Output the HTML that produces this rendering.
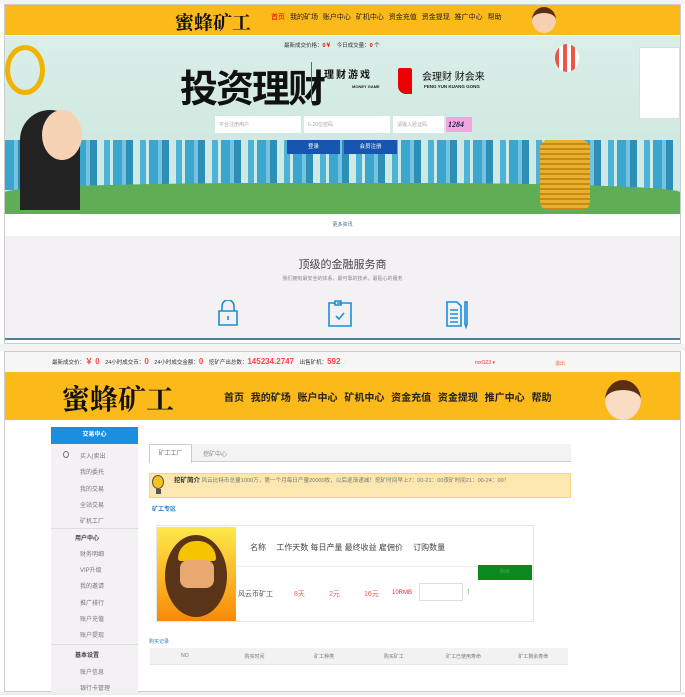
<!DOCTYPE html><html><head><meta charset="utf-8"><style>
*{margin:0;padding:0;box-sizing:border-box}
body{width:685px;height:695px;background:#fff;font-family:"Liberation Sans","Noto Sans CJK SC",sans-serif;position:relative;overflow:hidden;font-size:7px;color:#555}
.a{position:absolute}
.y{background:#fbb91a}
</style></head><body>
<div class="a" style="left:0;top:0;width:685px;height:4px;background:#f3f3f3"></div>
<div class="a" style="left:4px;top:4px;width:677px;height:340px;border:1px solid #ccc"></div>
<div class="a y" style="left:5px;top:5px;width:675px;height:30px"></div>
<div class="a" style="left:175px;top:8px;font:bold 19px 'Liberation Serif','Noto Serif CJK SC',serif;color:#111">蜜蜂矿工</div>
<div class="a" style="left:271px;top:12px;font-size:7px;color:#222;word-spacing:3px"><span style="color:#e00">首页</span> 我的矿场 账户中心 矿机中心 资金充值 资金提现 推广中心 帮助</div>
<div class="a" style="left:532px;top:7px;width:24px;height:26px;border-radius:50%;background:#f6d0b0;border-top:6px solid #5a2e12"></div>
<div class="a" style="left:5px;top:36px;width:675px;height:178px;background:linear-gradient(#dbeee9,#c8e6dc)"></div>
<div class="a" style="left:5px;top:140px;width:675px;height:50px;background:repeating-linear-gradient(90deg,#3aa6d0 0 9px,#74c4e0 9px 13px,#2d8fb8 13px 20px,#cfe9e5 20px 27px,#4db2d8 27px 33px,#cfe9e5 33px 36px)"></div>
<div class="a" style="left:5px;top:183px;width:675px;height:31px;background:#5fae55;border-radius:40% 40% 0 0/30% 30% 0 0"></div>
<div class="a" style="left:20px;top:110px;width:60px;height:100px;background:#222;border-radius:30px 30px 0 0"></div>
<div class="a" style="left:42px;top:110px;width:40px;height:50px;background:#f7d3b5;border-radius:50%"></div>
<div class="a" style="left:5px;top:45px;width:40px;height:50px;border:5px solid #f0b400;border-radius:50%"></div>
<div class="a" style="left:540px;top:140px;width:50px;height:70px;background:repeating-linear-gradient(#e6b030 0 3px,#c88a10 3px 5px);border-radius:8px"></div>
<div class="a" style="left:555px;top:44px;width:24px;height:28px;border-radius:50%;background:repeating-linear-gradient(90deg,#e8574a 0 4px,#fff 4px 8px)"></div>
<div class="a" style="left:284px;top:41px;font-size:5.5px;color:#333">最新成交价格：<b style="color:#e00">0￥</b>　今日成交量：<b style="color:#e00">0</b> 个</div>
<div class="a" style="left:180px;top:58px;font:bold 38px 'Noto Sans CJK SC',sans-serif;color:#111;letter-spacing:-2px">投资理财</div>
<div class="a" style="left:311px;top:62px;width:1px;height:40px;background:#666"></div>
<div class="a" style="left:324px;top:66px;font:bold 10px 'Noto Sans CJK SC',sans-serif;color:#111;letter-spacing:2px">理财游戏</div>
<div class="a" style="left:352px;top:84px;font-size:4px;color:#222;font-weight:bold">MONEY GAME</div>
<div class="a" style="left:398px;top:68px;width:14px;height:26px;background:#e00;border-radius:2px 2px 0 8px"></div>
<div class="a" style="left:422px;top:68px;font-size:10px;color:#111">会理财 财会来</div>
<div class="a" style="left:424px;top:84px;font-size:4.5px;color:#222;font-weight:bold">FENG YUN KUANG GONG</div>
<div class="a" style="left:215px;top:116px;width:86px;height:17px;background:#fff;font-size:5px;color:#aaa;padding:5px 4px">平台注册用户</div>
<div class="a" style="left:304px;top:116px;width:86px;height:17px;background:#fff;font-size:5px;color:#aaa;padding:5px 4px">6-20位密码</div>
<div class="a" style="left:393px;top:116px;width:51px;height:17px;background:#fff;font-size:5px;color:#aaa;padding:5px 4px">请输入验证码</div>
<div class="a" style="left:446px;top:117px;width:26px;height:15px;background:#f5a5e0;font:italic bold 8px serif;color:#224;padding:3px 2px">1284</div>
<div class="a" style="left:287px;top:140px;width:53px;height:14px;background:#1656b0;color:#fff;font-size:5.5px;text-align:center;line-height:14px">登录</div>
<div class="a" style="left:344px;top:140px;width:53px;height:14px;background:#1656b0;color:#fff;font-size:5.5px;text-align:center;line-height:14px">会员注册</div>
<div class="a" style="left:639px;top:47px;width:41px;height:72px;background:#fff;border:1px solid #ddd"></div>
<div class="a" style="left:5px;top:214px;width:675px;height:22px;background:#fff;text-align:center;font-size:5px;color:#468;line-height:22px">更多资讯</div>
<div class="a" style="left:5px;top:236px;width:675px;height:104px;background:#f4f1f4"></div>
<div class="a" style="left:5px;top:256px;width:675px;text-align:center;font-size:11px;color:#444">顶级的金融服务商</div>
<div class="a" style="left:5px;top:275px;width:675px;text-align:center;font-size:5px;color:#888">我们拥有最安全的体系，最可靠的技术，最贴心的服务</div>
<svg class="a" style="left:215px;top:300px" width="260" height="30" fill="none" stroke="#1a8fd8" stroke-width="1.6">
<path d="M7 11V6a6 6 0 0 1 12 0v5M4 11h18v14H4z M13 16v4"/>
<path d="M122 3h14v23h-22V3h6M120 1h6v4h-6zM121 16l3 3 5-6"/>
<path d="M232 2h10l4 4v20h-14zM235 10h8M235 14h8M235 18h8M235 22h8M250 2v22l1 3 1-3V2z"/>
</svg>
<div class="a" style="left:5px;top:338px;width:675px;height:2px;background:#4a7fa8"></div>
<div class="a" style="left:0;top:344px;width:685px;height:7px;background:#f3f3f3"></div>
<div class="a" style="left:4px;top:351px;width:677px;height:341px;border:1px solid #ccc"></div>
<div class="a" style="left:5px;top:352px;width:675px;height:20px;background:#f6f6f6"></div>
<div class="a" style="left:52px;top:356px;font-size:5.5px;color:#333;white-space:nowrap">最新成交价：<b style="color:#f44;font-size:8px">￥ 0</b>　24小时成交币：<b style="color:#f44;font-size:8px">0</b>　24小时成交金额：<b style="color:#f44;font-size:8px">0</b>　挖矿产出总数：<b style="color:#f44;font-size:8px">145234.2747</b>　出售矿机：<b style="color:#f44;font-size:8px">592</b></div>
<div class="a" style="left:475px;top:360px;font-size:5px;color:#e33">mxl123 ▾</div>
<div class="a" style="left:555px;top:360px;font-size:5px;color:#f63">退出</div>
<div class="a y" style="left:5px;top:372px;width:675px;height:48px"></div>
<div class="a" style="left:62px;top:378px;font:bold 28px 'Liberation Serif','Noto Serif CJK SC',serif;color:#111">蜜蜂矿工</div>
<div class="a" style="left:224px;top:389px;font-size:10px;font-weight:bold;color:#222;word-spacing:4px;white-space:nowrap">首页 我的矿场 账户中心 矿机中心 资金充值 资金提现 推广中心 帮助</div>
<div class="a" style="left:605px;top:380px;width:36px;height:40px;border-radius:50%;background:#f8dcc4;border-top:10px solid #5a2e12"></div>
<div class="a" style="left:51px;top:427px;width:87px;height:268px;background:#f4f1f4"></div>
<div class="a" style="left:51px;top:427px;width:87px;height:17px;background:#1a8fe0;color:#fff;font-size:6px;font-weight:bold;text-align:center;line-height:17px">交易中心</div>
<div class="a" style="left:80px;top:449px;font-size:6px;color:#777;line-height:16.3px">买入|卖出<br>我的委托<br>我的交易<br>全站交易<br>矿机工厂</div>
<div class="a" style="left:63px;top:451px;width:6px;height:7px;border-radius:50%;border:1.5px solid #777"></div>
<div class="a" style="left:51px;top:528px;width:87px;height:1px;background:#ddd"></div>
<div class="a" style="left:75px;top:533px;font-size:6px;font-weight:bold;color:#444">用户中心</div>
<div class="a" style="left:80px;top:547px;font-size:6px;color:#777;line-height:16.2px">财务明细<br>VIP升级<br>我的邀请<br>推广排行<br>账户充值<br>账户提现</div>
<div class="a" style="left:51px;top:644px;width:87px;height:1px;background:#ddd"></div>
<div class="a" style="left:75px;top:650px;font-size:6px;font-weight:bold;color:#444">基本设置</div>
<div class="a" style="left:80px;top:665px;font-size:6px;color:#777;line-height:16px">账户信息<br>银行卡管理</div>
<div class="a" style="left:149px;top:444px;width:422px;height:18px;background:#f3f3f3;border-bottom:1px solid #ccc"></div>
<div class="a" style="left:149px;top:444px;width:43px;height:19px;background:#fff;border:1px solid #ccc;border-bottom:none;font-size:6px;color:#777;text-align:center;line-height:18px">矿工工厂</div>
<div class="a" style="left:203px;top:449px;font-size:6px;color:#888">挖矿中心</div>
<div class="a" style="left:149px;top:473px;width:422px;height:25px;background:#fde7b0;border:1px solid #f5d48a"></div>
<div class="a" style="left:152px;top:475px;width:12px;height:14px;border-radius:50%;background:#f9c21a;border:1px solid #555"></div>
<div class="a" style="left:156px;top:489px;width:5px;height:5px;background:#555"></div>
<div class="a" style="left:174px;top:476px;font-size:5.6px;color:#777;width:392px;line-height:10px"><b style="font-size:6.5px;color:#333">挖矿简介</b> 风云比特币总量1000万，第一个月每日产量20000枚，以后逐渐递减！挖矿时间早上7：00-21：00夜矿时间21：00-24：00！</div>
<div class="a" style="left:152px;top:504px;font-size:6px;color:#2a7fd0;font-weight:bold">矿工专区</div>
<div class="a" style="left:156px;top:525px;width:378px;height:97px;border:1px solid #e6e6e6"></div>
<div class="a" style="left:157px;top:527px;width:79px;height:94px;background:linear-gradient(#fde94a,#f88a08)"></div>
<div class="a" style="left:165px;top:535px;width:62px;height:82px;border-radius:50%;background:#5a3418"></div>
<div class="a" style="left:178px;top:541px;width:38px;height:20px;border-radius:20px 20px 3px 3px;background:#f4c400"></div>
<div class="a" style="left:180px;top:560px;width:34px;height:28px;border-radius:8px;background:#e8a870"></div>
<div class="a" style="left:236px;top:566px;width:298px;height:1px;background:#eee"></div>
<div class="a" style="left:250px;top:542px;font-size:8px;color:#444;white-space:nowrap">名称　 工作天数 每日产量 最终收益 雇佣价 　订购数量</div>
<div class="a" style="left:478px;top:565px;width:54px;height:15px;background:#0a8a1e;color:#4caa4c;font-size:5px;text-align:center;line-height:15px">购买</div>
<div class="a" style="left:238px;top:589px;font-size:7px;color:#555;white-space:nowrap">风云币矿工</div>
<div class="a" style="left:294px;top:589px;font-size:7px;color:#f55">8天</div>
<div class="a" style="left:329px;top:589px;font-size:7px;color:#f55">2元</div>
<div class="a" style="left:364px;top:589px;font-size:7px;color:#f55">16元</div>
<div class="a" style="left:392px;top:590px;font-size:6px;color:#f22">10RMB</div>
<div class="a" style="left:419px;top:583px;width:44px;height:18px;border:1px solid #ddd"></div>
<div class="a" style="left:466px;top:586px;font-size:9px;color:#3a3">↑</div>
<div class="a" style="left:149px;top:638px;font-size:5px;color:#2a7fd0">购买记录</div>
<div class="a" style="left:150px;top:648px;width:418px;height:17px;background:#f4f1f4;border-bottom:1px solid #e4e4e4"></div>
<div class="a" style="left:150px;top:653px;width:418px;display:flex;font-size:5px;color:#777;text-align:center"><span style="flex:1">NO</span><span style="flex:1">购买时间</span><span style="flex:1">矿工种类</span><span style="flex:1">购买矿工</span><span style="flex:1">矿工已使用寿命</span><span style="flex:1">矿工剩余寿命</span></div>
<div class="a" style="left:0;top:692px;width:685px;height:3px;background:#eee"></div>
</body></html>
